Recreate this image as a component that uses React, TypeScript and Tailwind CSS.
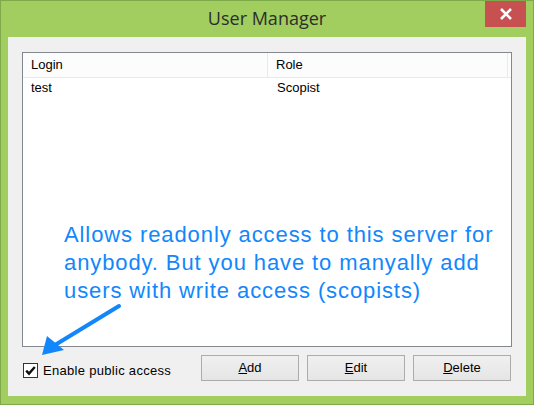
export default function App() {
  const sans = { fontFamily: '"Liberation Sans", Arial, sans-serif' };
  return (
    <div
      className="relative w-[534px] h-[405px] bg-[#a2cd5f] border border-[#7ea94a] flex flex-col"
      style={sans}
    >
      <div className="relative h-[36px] flex items-center justify-center">
        <span
          className="text-[18px] text-[#2b2f2b] leading-none pb-[2px]"
          style={{ fontFamily: '"Open Sans", sans-serif' }}
        >
          User Manager
        </span>
        <div className="absolute right-[7px] top-0 w-[41px] h-[26px] bg-[#c75050] flex items-center justify-center">
          <svg width="14" height="12" viewBox="0 0 14 12">
            <path d="M2 1 L12 11 M12 1 L2 11" stroke="#fff" strokeWidth="2.6" />
          </svg>
        </div>
      </div>
      <div className="mx-[7px] mb-[8px] flex-1 bg-[#f0f0f0] flex flex-col px-[14px] pt-[15px] pb-[15px]">
        <div className="h-[295px] border border-[#828790] bg-white flex flex-col text-[13px] text-black">
          <div className="h-[25px] flex border-b border-[#e5ebf1] bg-[#fcfcfd]">
            <div className="w-[245px] border-r border-[#e5ebf1] pl-[8px] flex items-center">Login</div>
            <div className="flex-1 pl-[8px] flex items-center mr-[3px] border-r border-[#e5ebf1]">Role</div>
          </div>
          <div className="h-[19px] flex items-center">
            <div className="w-[245px] pl-[8px]">test</div>
            <div className="flex-1 pl-[9px]">Scopist</div>
          </div>
        </div>
        <div className="mt-[8px] h-[26px] flex items-center justify-between text-[13px] text-black">
          <label className="ml-[1px] mt-[5px] flex items-center gap-[5px]">
            <span className="w-[15px] h-[15px] border border-[#333] bg-white flex items-center justify-center">
              <svg width="13" height="13" viewBox="0 0 13 13">
                <path d="M2.2 6.6 L5 9.6 L10.8 3" stroke="#111" strokeWidth="2.4" fill="none" />
              </svg>
            </span>
            <span className="tracking-[0.3px]">Enable public access</span>
          </label>
          <div className="flex gap-[8px] mr-[1px]">
            {["Add", "Edit", "Delete"].map((t) => (
              <button
                key={t}
                className="w-[98px] h-[26px] border border-[#acacac] bg-gradient-to-b from-[#f0f0f0] to-[#e5e5e5] flex items-center justify-center text-[13px] text-black"
              >
                <span>
                  <span className="underline">{t[0]}</span>
                  {t.slice(1)}
                </span>
              </button>
            ))}
          </div>
        </div>
      </div>
      <div className="absolute left-[63px] top-[220px] text-[22px] leading-[28px] tracking-[0.9px] text-[#1187fb] whitespace-nowrap">
        Allows readonly access to this server for
        <br />
        anybody. But you have to manyally add
        <br />
        users with write access (scopists)
      </div>
      <svg className="absolute left-0 top-0 pointer-events-none" width="534" height="405">
        <line x1="118" y1="305" x2="54" y2="344" stroke="#1187fb" strokeWidth="4" strokeLinecap="round" />
        <polygon points="41,354 46,335 63,349" fill="#1187fb" />
      </svg>
    </div>
  );
}
